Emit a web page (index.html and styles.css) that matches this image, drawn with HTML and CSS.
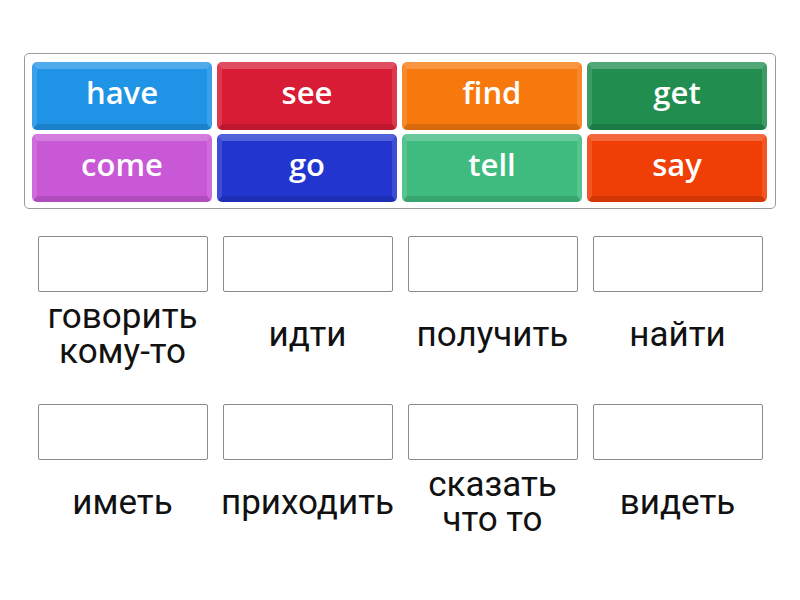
FILE: index.html
```html
<!DOCTYPE html>
<html>
<head>
<meta charset="utf-8">
<link rel="stylesheet" href="styles.css">
</head>
<body>
<div class="page">
  <div class="bank">
    <div class="tile c-blue">have</div>
    <div class="tile c-red">see</div>
    <div class="tile c-orange">find</div>
    <div class="tile c-green">get</div>
    <div class="tile c-pink">come</div>
    <div class="tile c-navy">go</div>
    <div class="tile c-mint">tell</div>
    <div class="tile c-vermil">say</div>
  </div>
  <div class="targets">
    <div class="cell"><div class="box"></div><div class="label">говорить<br>кому-то</div></div>
    <div class="cell"><div class="box"></div><div class="label">идти</div></div>
    <div class="cell"><div class="box"></div><div class="label">получить</div></div>
    <div class="cell"><div class="box"></div><div class="label">найти</div></div>
    <div class="cell"><div class="box"></div><div class="label">иметь</div></div>
    <div class="cell"><div class="box"></div><div class="label">приходить</div></div>
    <div class="cell"><div class="box"></div><div class="label">сказать<br>что то</div></div>
    <div class="cell"><div class="box"></div><div class="label">видеть</div></div>
  </div>
</div>
</body>
</html>
```
FILE: styles.css
```css
html, body {
  margin: 0;
  padding: 0;
  background: #ffffff;
}
.page {
  width: 800px;
  height: 600px;
  padding-top: 53px;
  box-sizing: border-box;
}
.bank {
  margin-left: 24px;
  width: 752px;
  height: 156px;
  box-sizing: border-box;
  border: 1px solid #9a9a9a;
  border-radius: 5px;
  padding: 8px 8px 6px 7px;
  display: grid;
  grid-template-columns: repeat(4, 180px);
  grid-template-rows: 68px 68px;
  column-gap: 5px;
  row-gap: 4px;
}
.tile {
  box-sizing: border-box;
  border-radius: 5px;
  border-style: solid;
  border-width: 7px 5px 6px 5px;
  border-color: rgba(255,255,255,0.22) rgba(255,255,255,0.12) rgba(0,0,0,0.12) rgba(255,255,255,0.12);
  color: #ffffff;
  font-family: "Open Sans", "Noto Sans", sans-serif;
  font-weight: 600;
  font-size: 31px;
  display: flex;
  align-items: center;
  justify-content: center;
  padding-bottom: 9px;
}
.c-blue { background: #1f93e6; }
.c-red { background: #d91c36; }
.c-orange { background: #f7790d; }
.c-green { background: #218e4f; }
.c-pink { background: #c858d6; }
.c-navy { background: #2236cf; }
.c-mint { background: #40bb80; }
.c-vermil { background: #f03f06; }

.targets {
  margin-left: 30px;
  margin-top: 27px;
  width: 740px;
  display: grid;
  grid-template-columns: repeat(4, 185px);
  grid-auto-rows: 140px;
  row-gap: 28px;
}
.cell {
  display: flex;
  flex-direction: column;
  align-items: center;
}
.box {
  width: 170px;
  height: 56px;
  box-sizing: border-box;
  border: 1px solid #8a8a8a;
  border-radius: 2px;
  background: #fff;
}
.label {
  flex: 1;
  display: flex;
  align-items: center;
  justify-content: center;
  text-align: center;
  font-family: Roboto, "Liberation Sans", sans-serif;
  font-size: 35px;
  line-height: 35px;
  color: #111;
  white-space: nowrap;
}
```
